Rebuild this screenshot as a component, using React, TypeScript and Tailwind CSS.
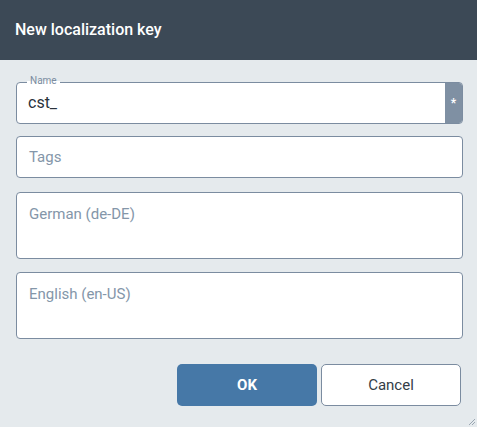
import React from "react";

export default function App() {
  return (
    <div className="w-[477px] h-[427px] flex flex-col bg-[#e5eaed] overflow-hidden relative" style={{ fontFamily: "Roboto, 'Liberation Sans', sans-serif" }}>
      <div className="h-[60px] shrink-0 bg-[#3c4956] flex items-center pl-[15px]">
        <span className="text-white text-[16px] font-medium">New localization key</span>
      </div>
      <div className="flex flex-col pl-4 pr-[14px] pt-[22px]">
        <div className="relative h-[42px] flex border border-[#7b8ca0] rounded-[4px] bg-white">
          <span className="absolute -top-[8px] left-[10px] px-[3px] text-[10px] leading-[12px] text-[#7a8ca0]" style={{ background: "linear-gradient(to bottom, #e5eaed 50%, #ffffff 50%)" }}>Name</span>
          <div className="flex-1 flex items-center pl-[11px] text-[16px] text-[#2a323b]">cst_</div>
          <div className="w-[17px] bg-[#7f90a3] rounded-r-[3px] flex items-center justify-center text-white text-[12px] font-bold">*</div>
        </div>
        <div className="mt-[12px] h-[42px] flex items-center border border-[#7b8ca0] rounded-[4px] bg-white pl-[12px] text-[15px] text-[#8496a9]">Tags</div>
        <div className="mt-[14px] h-[67px] border border-[#7b8ca0] rounded-[4px] bg-white pl-[12px] pt-[10px] text-[15px] text-[#8496a9]">German (de-DE)</div>
        <div className="mt-[13px] h-[67px] border border-[#7b8ca0] rounded-[4px] bg-white pl-[12px] pt-[10px] text-[15px] text-[#8496a9]">English (en-US)</div>
        <div className="mt-[25px] flex justify-end gap-[4px] pr-[2px]">
          <button className="w-[140px] h-[42px] rounded-[5px] bg-[#4678a7] text-white text-[15px] font-bold">OK</button>
          <button className="w-[140px] h-[42px] rounded-[5px] bg-white border border-[#7b8ca0] text-[#333d47] text-[15px] font-normal">Cancel</button>
        </div>
      </div>
      <svg className="absolute right-[1px] bottom-[1px]" width="8" height="8" viewBox="0 0 8 8">
        <line x1="1" y1="7" x2="7" y2="1" stroke="#9aa6b2" strokeWidth="1" />
        <line x1="4" y1="7" x2="7" y2="4" stroke="#9aa6b2" strokeWidth="1" />
      </svg>
    </div>
  );
}
